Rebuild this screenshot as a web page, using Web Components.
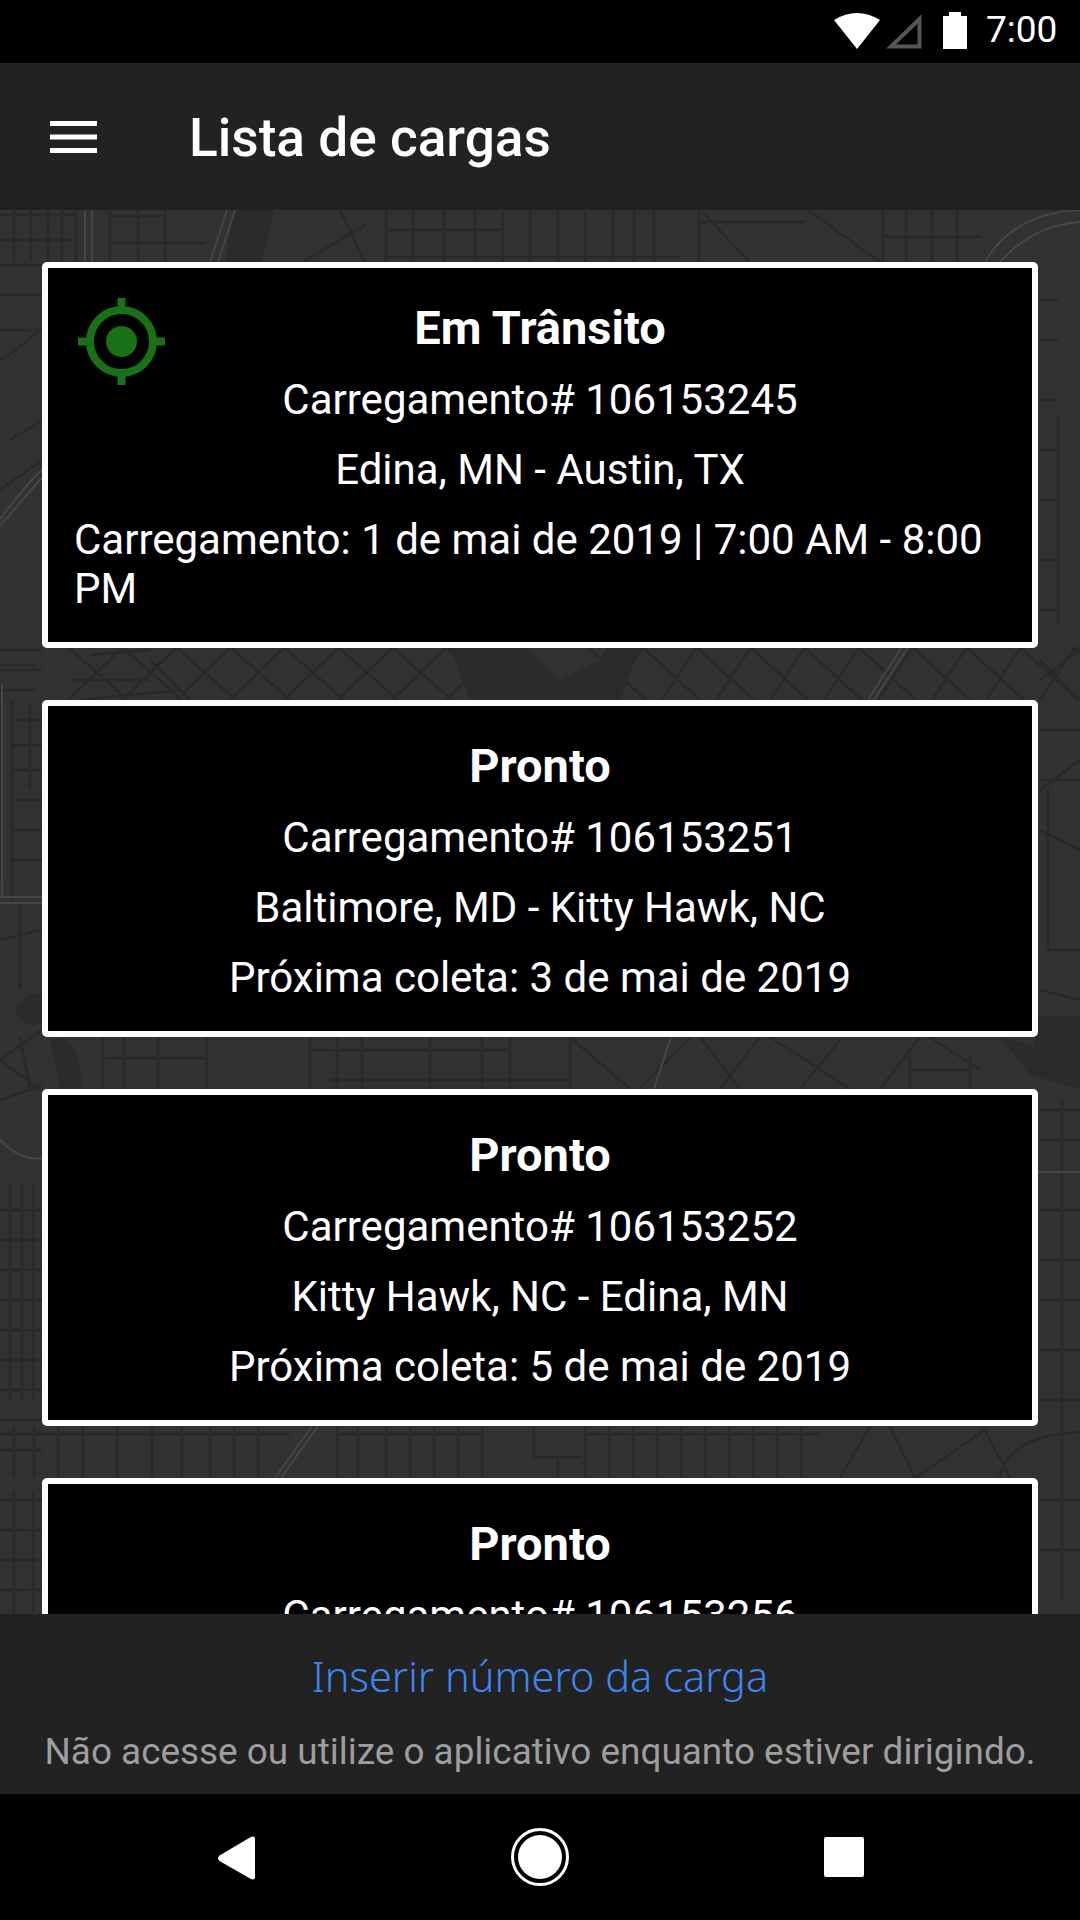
<!doctype html>
<html lang="pt"><head><meta charset="utf-8">
<style>
html,body{margin:0;height:1920px;background:#000;font-family:Roboto,"Liberation Sans",sans-serif;color:#fff}
body{display:flex;flex-direction:column;overflow:hidden}
</style></head><body>
<status-bar></status-bar>
<app-bar title="Lista de cargas"></app-bar>
<load-list>
<load-card status="Em Trânsito" active><span>Carregamento# 106153245</span><span>Edina, MN - Austin, TX</span><span class="wrap">Carregamento: 1 de mai de 2019 | 7:00 AM - 8:00 PM</span></load-card>
<load-card status="Pronto"><span>Carregamento# 106153251</span><span>Baltimore, MD - Kitty Hawk, NC</span><span>Próxima coleta: 3 de mai de 2019</span></load-card>
<load-card status="Pronto"><span>Carregamento# 106153252</span><span>Kitty Hawk, NC - Edina, MN</span><span>Próxima coleta: 5 de mai de 2019</span></load-card>
<load-card status="Pronto"><span>Carregamento# 106153256</span></load-card>
</load-list>
<bottom-panel></bottom-panel>
<nav-bar></nav-bar>
<script>
function def(name,html,init){customElements.define(name,class extends HTMLElement{connectedCallback(){if(this.shadowRoot)return;const r=this.attachShadow({mode:'open'});r.innerHTML=html;init&&init(this,r)}})}
def('status-bar',`<style>:host{display:flex;height:63px;flex:none;background:#000;align-items:flex-start;box-sizing:border-box;padding:13px 22px 0 834px}
svg{display:block;flex:none}.t{font:400 37px/34px Roboto,sans-serif;color:#fff;margin-left:19px;white-space:nowrap}</style>
<svg width="46" height="36" viewBox="0 0 46 36"><path d="M0 7Q23-7 46 7L23 36Z" fill="#fff"/></svg>
<svg width="37" height="36" viewBox="0 0 37 36" style="margin-left:5px"><path d="M34.500 6V33.500H6Z" fill="none" stroke="#555" stroke-width="4"/></svg>
<svg width="24" height="37" viewBox="0 0 24 37" style="margin-left:21px;margin-top:-1px"><path d="M6 0h12v4h6v33H0V4h6z" fill="#fff"/></svg>
<span class="t">7:00</span>`);
def('app-bar',`<style>:host{display:flex;height:147px;flex:none;background:#222;align-items:center;box-sizing:border-box;padding-left:50px}
svg{display:block}.t{font:500 53.200px Roboto,sans-serif;color:#fff;margin-left:92px;margin-top:2px;white-space:nowrap}</style>
<svg width="47" height="32" viewBox="0 0 47 32"><path d="M0 0h47v5H0zM0 13.500h47v5H0zM0 27h47v5H0z" fill="#fff"/></svg><span class="t"></span>`,(h,r)=>{r.querySelector('.t').textContent=h.getAttribute('title')});
def('load-list',`<style>:host{display:grid;flex:1;min-height:0;overflow:hidden;background:#323232}
.map,.list{grid-area:1/1}.map{display:block;width:1080px;height:1404px}
.list{display:flex;flex-direction:column;gap:52px;padding:52px 42px 0;min-height:0}</style>
<svg class="map" viewBox="0 210 1080 1404" fill="none"></svg><div class="list"><slot></slot></div>`,(h,r)=>{
 const V=(xs,a,b)=>xs.map(x=>`M${x} ${a}V${b}`).join(''),H=(ys,a,b)=>ys.map(y=>`M${a} ${y}H${b}`).join('');
 const D=l=>l.map(p=>`M${p[0]} ${p[1]}L${p[2]} ${p[3]}`).join('');
 let dark='M234 210H275L262 262H225ZM450 647H640L620 700H470ZM520 640L560 680 600 660 610 640ZM1000 1037L1080 1060V1089L1030 1075ZM1035 1016H1080V1070H1035ZM15 1010C30 985 45 990 50 1010 45 1030 25 1030 15 1010ZM50 1040C70 1030 85 1060 80 1090H60Z';
 let s=V([14,31,48,62,76],210,262)+H([215,240],0,76)+V([110,138,165],210,262)+H([216],110,165)+H([243],110,205)
 +D([[303,262,365,225],[340,210,365,262]])+V([386,413,444,475,503,530,558,585,613,634,654,699],210,262)+H([230],386,503)+H([257],386,680)
 +H([222],699,805)+D([[700,210,750,262],[808,210,880,262]])+V([883,906,932,957],210,262)+H([237],883,980);
 for(let x=-40;x<1200;x+=54){if(x>60&&x<470){s+=D([[x,700,x+55,647]]);s+=D([[x,647,x+60,700]])}if(x>560){s+=D([[x,700,x+35,647]]);s+=D([[x-20,647,x+38,700]])}}
 s+=D([[90,655,150,650],[70,680,150,680],[80,700,180,690],[150,660,190,700]])+H([665,690],0,35);
 s+=V([103,124,158,207,310,337,362,430,482,510,570],1037,1089)+H([1058],103,207)+H([1050],310,510)+H([1080],330,570)
 +D([[570,1037,630,1089],[640,1089,690,1037],[700,1037,740,1089],[720,1089,760,1037],[770,1037,850,1089],[800,1089,840,1040],[880,1089,920,1037],[930,1037,980,1070]])+V([910,970],1055,1089)+H([1070],910,970);
 s+=D([[0,1060,40,1090],[20,1037,30,1089]]);
 s+=V([14,34,58,83,117,152,182,210,234,258],1426,1478)+H([1434],0,290)+V([337,358,386,410,434,458,482],1426,1478)+H([1434],337,482)
 +H([1457],534,582)+V([558],1457,1478)+V([534],1426,1457)+V([585,609,633,657,681,705,729,753,777,801],1426,1478)+H([1434],585,820)
 +D([[870,1426,840,1478],[890,1426,915,1478],[915,1478,985,1430],[985,1430,1010,1478]])+'M1000 1478C1005 1450 1030 1435 1080 1432';
 s+=H([240,265,295,330],0,42)+'M0 360C20 350 30 335 42 330M10 440L42 420M0 490L42 460M0 650H42M0 670H42'
 +V([12],700,900)+H([720,745,770,800,830,860],12,42)+'M0 700V880M30 705V790'+'M20 905V990M0 940L42 930M0 1060L42 1030M0 1100L42 1085'
 +V([10,22,33],1185,1400)+H([1210,1240,1270,1300,1330,1360,1390,1420,1450,1500,1530,1560,1590],0,42)+V([14,33],1490,1614);
 s+=V([1058],415,625)+H([300,340,400,450,500,560,610],1040,1058)+D([[1040,680,1080,650],[1040,660,1080,700]])
 +H([730,780],1040,1080)+D([[1040,790,1080,760],[1040,830,1080,850]])+V([1048],790,950)+H([950],1048,1080)+D([[1040,990,1080,1000]])
 +V([1062],1100,1600)+H([1110,1140,1210,1260,1300,1350,1400,1500,1550],1040,1080);
 let road='M85 210V262M92 210V262M227 210L210 262M235 210L218 262M985 262C1000 235 1030 212 1080 210M1000 262C1015 245 1040 225 1080 222'
 +'M902 647L868 700M908 647L874 700M671 1037L654 1089M312 1426L275 1478M318 1426L281 1478'
 +'M0 519C15 500 30 480 42 470M0 525C15 510 30 490 42 478M0 897H42M0 903H42M2 685V895M0 1140C15 1155 30 1160 42 1158M1038 1172H1080';
 h.shadowRoot.querySelector('svg').innerHTML=`<path d="${dark}" fill="#2b2b2b"/><path d="${s}" stroke="#292929" stroke-width="2.500"/><path d="${road}" stroke="#464646" stroke-width="2"/>`;
});
def('load-card',`<style>:host{display:block;flex:none;box-sizing:border-box;background:#000;border:6px solid #fff;border-radius:5px;padding:25px 26px 19px;text-align:center;position:relative;color:#fff;font:400 42px Roboto,sans-serif}
.h{font-weight:700;font-size:47px;line-height:70px;height:71px;white-space:nowrap}
::slotted(span){display:block;line-height:49px;padding:11px 0 10px}::slotted(.wrap){text-align:left}
svg{position:absolute;left:30px;top:30px}</style>
<div class="h"></div><slot></slot>`,(h,r)=>{r.querySelector('.h').textContent=h.getAttribute('status');if(h.hasAttribute('active'))r.querySelector('.h').insertAdjacentHTML('beforebegin','<svg width="87" height="87" viewBox="0 0 87 87"><circle cx="43.500" cy="43.500" r="31.500" fill="none" stroke="#1a7017" stroke-width="8"/><circle cx="43.500" cy="43.500" r="15.500" fill="#1a7017"/><path d="M39.500 0h8v10h-8zM39.500 77h8v10h-8zM0 39.500h10v8H0zM77 39.500h10v8H77z" fill="#1a7017"/></svg>')});
def('bottom-panel',`<style>:host{display:flex;flex-direction:column;align-items:center;height:180px;flex:none;background:#222;box-sizing:border-box}
.a{font:300 41.500px "Noto Sans",Roboto,sans-serif;color:#3d86f0;line-height:50px;margin-top:37px;white-space:nowrap}
.b{font:400 36.900px Roboto,sans-serif;color:#9e9e9e;line-height:50px;margin-top:26px;white-space:nowrap}</style>
<span class="a">Inserir número da carga</span><span class="b">Não acesse ou utilize o aplicativo enquanto estiver dirigindo.</span>`);
def('nav-bar',`<style>:host{display:flex;height:126px;flex:none;background:#000;align-items:flex-start;box-sizing:border-box;padding:34px 0 0 218px}
svg{display:block;flex:none}</style>
<svg width="37" height="44" viewBox="0 0 37 44" style="margin-top:8px"><path d="M1.500 19.500 32 1.500q5-2.500 5 2v37q0 4.500-5 2L1.500 25q-3-2.750 0-5.500z" fill="#fff"/></svg>
<svg width="58" height="58" viewBox="0 0 58 58" style="margin-left:256px"><circle cx="29" cy="29" r="27.500" fill="none" stroke="#fff" stroke-width="3"/><circle cx="29" cy="29" r="22" fill="#fff"/></svg>
<svg width="40" height="40" viewBox="0 0 40 40" style="margin-left:255px;margin-top:9px"><rect width="40" height="40" rx="2" fill="#fff"/></svg>`);
</script></body></html>
